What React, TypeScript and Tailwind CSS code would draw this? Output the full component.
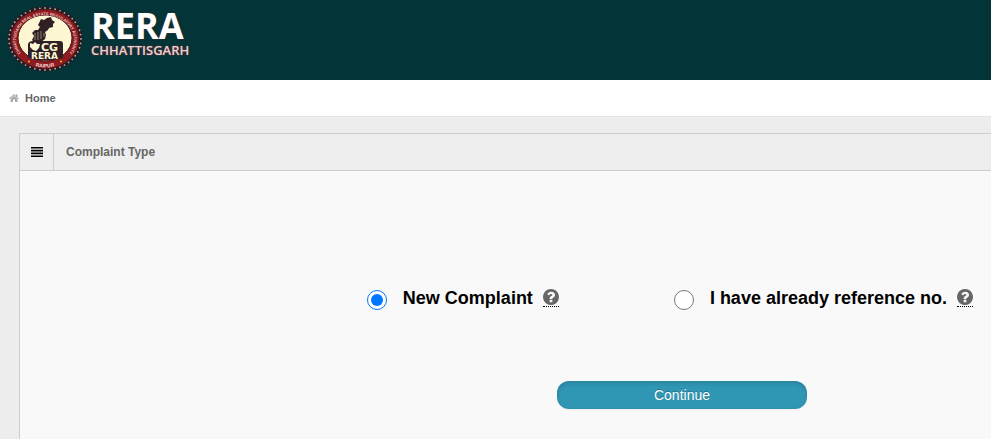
import { useState } from "react"

const dots = Array.from({ length: 44 }, (_, i) => {
  const a = (i / 44) * Math.PI * 2
  return { x: 38 + Math.cos(a) * 36, y: 33 + Math.sin(a) * 31 }
})

function Emblem() {
  return (
    <svg width="76" height="66" viewBox="0 0 76 66" role="img" aria-label="CG RERA Raipur">
      <ellipse cx="38" cy="33" rx="37.5" ry="32.5" fill="#2a1b20" />
      {dots.map((dot, i) => (
        <circle key={i} cx={dot.x} cy={dot.y} r="0.9" fill="#b9a9a8" />
      ))}
      <ellipse cx="38" cy="33" rx="34" ry="29.5" fill="#8f1a20" />
      <ellipse cx="38" cy="32" rx="27" ry="23" fill="#fdf6d3" stroke="#4a1216" strokeWidth="1" />
      <defs>
        <path id="ring-top" d="M17.5 51 A29 24.5 0 1 1 58.5 51" />
        <path id="ring-bottom" d="M24 59 Q38 64 52 59" />
      </defs>
      <text fill="#e9c9c4" fontSize="4" fontWeight="700" fontFamily="Liberation Sans, sans-serif">
        <textPath href="#ring-top" startOffset="50%" textAnchor="middle">
          CHHATTISGARH REAL ESTATE REGULATORY AUTHORITY
        </textPath>
      </text>
      <text fill="#f3dcd8" fontSize="5" fontWeight="700" fontFamily="Liberation Sans, sans-serif">
        <textPath href="#ring-bottom" startOffset="50%" textAnchor="middle">
          RAIPUR
        </textPath>
      </text>
      <circle cx="22" cy="55.5" r="1" fill="#f0c02c" />
      <circle cx="54" cy="55.5" r="1" fill="#f0c02c" />
      <path
        d="M34 13 L37 14 L40 12 L44 11 L45 14 L48 16 L46 18 L46 21 L42 22 L41 24 L38 26 L39 29 L38 33 L34 36 L28 37 L25 34 L27 30 L25 27 L28 24 L31 24 L33 21 L31 19 Z"
        fill="#2f2026"
      />
      <path d="M28 27 V34 M31 26 V34 M34 25 V33 M37 27 V31" stroke="#8d8272" strokeWidth="1" />
      <path d="M21 38 Q22 35 26 35 H53 Q56 35 56 38 V52 Q38 57 21 52 Z" fill="#2f2026" />
      <path d="M23 37 L26 38 L28 36 L30 38 L33 38 L32 42 L29 45 L26 44 L23 41 Z" fill="#fdf6d3" />
      <text x="34" y="45" fill="#fdf6d3" fontSize="11" fontWeight="700" fontFamily="DejaVu Sans, sans-serif">
        CG
      </text>
      <text x="24" y="53" fill="#fdf6d3" fontSize="9" fontWeight="700" fontFamily="DejaVu Sans, sans-serif">
        RERA
      </text>
    </svg>
  )
}

function HomeIcon() {
  return (
    <svg width="10" height="8" viewBox="0 0 20 16" fill="#aaaaaa" aria-hidden="true">
      <path d="M10 0 L14 3.4 V1 H17 V6 L20 8.6 L18.8 10 L10 2.6 L1.2 10 L0 8.6 Z" />
      <path d="M10 3.4 L17 9.5 V16 H12 V11 H8 V16 H3 V9.5 Z" />
    </svg>
  )
}

function HelpIcon() {
  return (
    <svg width="16" height="16" viewBox="0 0 1536 1536" fill="#666666" aria-hidden="true">
      <path d="M896 1248v-192q0-14-9-23t-23-9H672q-14 0-23 9t-9 23v192q0 14 9 23t23 9h192q14 0 23-9t9-23zm256-672q0-88-55.5-163T958 297t-170-41q-243 0-371 213-15 24 8 42l132 100q7 6 19 6 16 0 25-12 53-68 86-92 34-24 86-24 48 0 85.5 26t37.5 59q0 38-20 61t-68 45q-63 28-115.5 86.5T640 892v36q0 14 9 23t23 9h192q14 0 23-9t9-23q0-19 21.5-49.5T972 829q32-18 49-28.5t46-35 44.5-48 28-60.5 12.5-81zm384 192q0 209-103 385.5T1153.5 1433 768 1536t-385.5-103T103 1153.5 0 768t103-385.5T382.5 103 768 0t385.5 103T1433 382.5 1536 768z" />
    </svg>
  )
}

const options = [
  { id: "new", label: "New Complaint", help: "Register a new complaint" },
  { id: "existing", label: "I have already reference no.", help: "Continue with a reference number" },
]

export default function App() {
  const [selected, setSelected] = useState("new")

  return (
    <div className="min-h-screen flex flex-col bg-[#ededed] font-['Liberation_Sans',Arial,sans-serif]">
      <header className="flex items-start h-20 px-[7px] pt-[6px] bg-[#023438]">
        <Emblem />
        <div className="flex flex-col pl-2 pt-1 text-white font-['Open_Sans',sans-serif]">
          <span className="text-4xl leading-8 font-bold [text-shadow:0_0_2px_#5a2a2c]">RERA</span>
          <span className="text-[13px] leading-4 font-semibold text-[#e6d3d3] [text-shadow:0_0_2px_#b03038]">CHHATTISGARH</span>
        </div>
      </header>

      <nav className="flex items-center h-[37px] px-[9px] bg-white border-b border-[#e0e7e8]">
        <a href="#" className="flex items-center gap-[6px] text-[11px] font-bold text-[#666666]">
          <HomeIcon />
          Home
        </a>
      </nav>

      <main className="flex-1 flex flex-col pl-[19px] pt-4">
        <section className="flex-1 flex flex-col border-l border-t border-[#cdcdcd] bg-[#f9f9f9]">
          <div className="flex h-[37px] bg-[#eeeeee] border-b border-[#cdcdcd]">
            <span className="flex items-center justify-center w-[34px] border-r border-[#cdcdcd]">
              <svg width="12" height="10" viewBox="0 0 12 10" fill="#000000" aria-hidden="true">
                <path d="M0 0h12v1.6H0zM0 2.8h12v1.6H0zM0 5.6h12v1.6H0zM0 8.4h12v1.6H0z" />
              </svg>
            </span>
            <h1 className="flex items-center px-3 text-xs font-bold text-[#666666]">Complaint Type</h1>
          </div>

          <form className="flex flex-col pt-[116px]" onSubmit={(e) => e.preventDefault()}>
            <div className="flex justify-end gap-[115px] pr-[18px]">
              {options.map((option) => (
                <div key={option.id} className="flex items-start">
                  <input
                    type="radio"
                    id={option.id}
                    name="complaint"
                    checked={selected === option.id}
                    onChange={() => setSelected(option.id)}
                    className="size-5 mt-[3px] mr-4"
                  />
                  <label htmlFor={option.id} className="text-lg leading-[22px] font-bold text-black">
                    {option.label}
                  </label>
                  <abbr title={option.help} className="ml-[10px] mt-[2px] pb-px border-b border-dotted border-black no-underline">
                    <HelpIcon />
                  </abbr>
                </div>
              ))}
            </div>
            <button
              type="submit"
              className="w-[250px] h-7 mt-[71px] ml-[537px] rounded-xl bg-[#2f96b4] text-sm text-white [text-shadow:0_-1px_0_rgba(0,0,0,0.25)] shadow-[inset_0_2px_4px_rgba(0,0,0,0.15),0_1px_2px_rgba(0,0,0,0.05)]"
            >
              Continue
            </button>
          </form>
        </section>
      </main>
    </div>
  )
}
